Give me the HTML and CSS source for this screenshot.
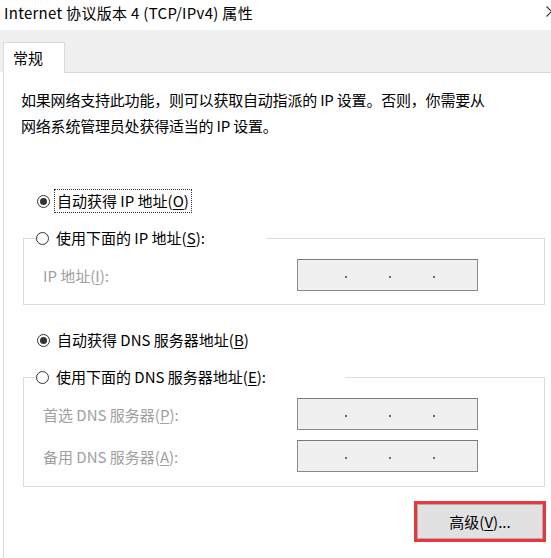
FILE: index.html
```html
<!DOCTYPE html>
<html lang="zh-CN">
<head>
<meta charset="utf-8">
<title>Internet 协议版本 4 (TCP/IPv4) 属性</title>
<link rel="stylesheet" href="styles.css">
</head>
<body>
<div class="window">
  <div class="titlebar">
    <span class="title">Internet 协议版本 4 (TCP/IPv4) 属性</span>
    <svg class="close" width="11" height="11" viewBox="0 0 11 11"><path d="M0.5 0.5 L10.5 10.5 M10.5 0.5 L0.5 10.5" stroke="#333" stroke-width="1.1" fill="none"/></svg>
  </div>
  <div class="band">
    <div class="tab">常规</div>
  </div>
  <div class="panel">
    <div class="content">
      <p class="desc">如果网络支持此功能，则可以获取自动指派的 IP 设置。否则，你需要从<br>网络系统管理员处获得适当的 IP 设置。</p>

      <div class="radio-row first">
        <span class="radio checked"></span>
        <span class="label focus">自动获得 IP 地址(<u>O</u>)</span>
      </div>

      <fieldset class="group">
        <legend class="legend ip-legend">
          <span class="radio"></span>
          <span class="label">使用下面的 IP 地址(<u>S</u>):</span>
        </legend>
        <div class="field-row first-field">
          <span class="field-label">IP 地址(<u>I</u>):</span>
          <div class="ipbox"><i></i><i></i><i></i></div>
        </div>
      </fieldset>

      <div class="radio-row second">
        <span class="radio checked"></span>
        <span class="label">自动获得 DNS 服务器地址(<u>B</u>)</span>
      </div>

      <fieldset class="group dns">
        <legend class="legend dns-legend">
          <span class="radio"></span>
          <span class="label">使用下面的 DNS 服务器地址(<u>E</u>):</span>
        </legend>
        <div class="field-row first-field">
          <span class="field-label">首选 DNS 服务器(<u>P</u>):</span>
          <div class="ipbox"><i></i><i></i><i></i></div>
        </div>
        <div class="field-row next-field">
          <span class="field-label">备用 DNS 服务器(<u>A</u>):</span>
          <div class="ipbox"><i></i><i></i><i></i></div>
        </div>
      </fieldset>

      <div class="actions">
        <button class="btn" type="button">高级(<u>V</u>)...</button>
      </div>
    </div>
  </div>
</div>
</body>
</html>
```

FILE: styles.css
```css
html, body {
  margin: 0;
  padding: 0;
  background: #ffffff;
}
body {
  width: 551px;
  height: 558px;
  overflow: hidden;
  font-family: "Noto Sans CJK SC", "Noto Sans", sans-serif;
  font-size: 15px;
  color: #000;
}
.window {
  display: flex;
  flex-direction: column;
  width: 551px;
  height: 558px;
}
.titlebar {
  height: 30px;
  display: flex;
  align-items: flex-start;
  justify-content: space-between;
  padding-left: 4px;
  box-sizing: border-box;
  background: #fff;
}
.title {
  line-height: 26px;
  letter-spacing: 0.3px;
}
.close {
  margin-top: 6px;
  margin-right: -6px;
  flex: none;
}
.band {
  background: #f0f0f0;
  padding-top: 12px;
  padding-left: 3px;
  display: flex;
}
.tab {
  width: 62px;
  height: 31px;
  box-sizing: border-box;
  background: #fff;
  border: 1px solid #d9d9d9;
  border-bottom: none;
  padding-left: 9px;
  line-height: 29px;
  margin-bottom: -1px;
  position: relative;
  z-index: 1;
}
.panel {
  flex: 1;
  margin-left: 3px;
  background: #fff;
  border-top: 1px solid #d9d9d9;
  border-left: 1px solid #d9d9d9;
}
.content {
  width: 522px;
  margin-left: 19px;
}
.desc {
  margin: 14px 0 0 -2px;
  line-height: 26px;
  letter-spacing: -0.2px;
}
.radio-row {
  display: flex;
  align-items: center;
  height: 26px;
  margin-left: 14px;
}
.radio-row.first {
  margin-top: 49px;
}
.radio-row.second {
  margin-top: 22px;
}
.radio {
  width: 13px;
  height: 13px;
  box-sizing: border-box;
  border: 1px solid #333;
  border-radius: 50%;
  flex: none;
  display: flex;
  align-items: center;
  justify-content: center;
  background: #fff;
}
.radio.checked::after {
  content: "";
  width: 7px;
  height: 7px;
  border-radius: 50%;
  background: #333;
}
.label {
  margin-left: 6px;
  padding: 0 1px;
  line-height: 20px;
  white-space: nowrap;
}
.label.focus {
  outline: 1px dotted #333;
  outline-offset: 0;
  margin-left: 5px;
  padding: 1px 2px;
}
.group {
  margin: 11px 0 0 0;
  padding: 0 0 13px 12px;
  border: 1px solid #dcdcdc;
  min-width: 0;
}
.group.dns {
  padding-bottom: 14px;
}
.legend {
  display: flex;
  align-items: center;
  height: 26px;
  padding: 0;
  background: #fff;
}
.ip-legend {
  width: 230px;
}
.dns-legend {
  width: 309px;
}
.field-row {
  display: flex;
  align-items: center;
  height: 32px;
  margin-left: 7px;
}
.field-row.first-field {
  margin-top: 8px;
}
.field-row.next-field {
  margin-top: 10px;
}
.field-label {
  color: #a0a0a0;
  width: 254px;
  flex: none;
}
.ipbox {
  width: 181px;
  height: 32px;
  box-sizing: border-box;
  background: #f0f0f0;
  border: 1px solid #8a8a8a;
  border-top-color: #7a7a7a;
  display: flex;
  align-items: center;
  padding-left: 47px;
  padding-top: 3px;
  gap: 42px;
}
.ipbox i {
  width: 2px;
  height: 2px;
  background: #6d6d6d;
  display: block;
}
.actions {
  display: flex;
  justify-content: flex-end;
  margin-top: 14px;
}
.btn {
  width: 132px;
  height: 41px;
  box-sizing: border-box;
  border: 3px solid #e8383d;
  background: #e1e1e1;
  box-shadow: inset 0 0 0 1px #adadad;
  font-family: "Noto Sans CJK SC", "Noto Sans", sans-serif;
  font-size: 15px;
  color: #000;
  padding: 0;
  margin-right: -1px;
}
u {
  text-decoration: underline;
  text-underline-offset: 2px;
}
```
